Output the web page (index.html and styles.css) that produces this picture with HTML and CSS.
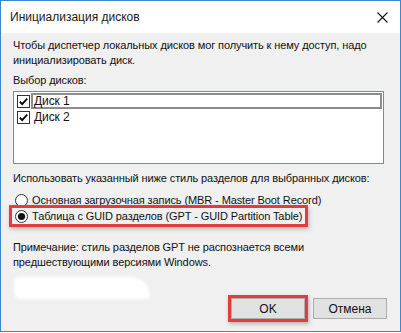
FILE: index.html
```html
<!DOCTYPE html>
<html>
<head>
  <meta charset="utf-8">
  <title>Инициализация дисков</title>
  <link rel="stylesheet" href="styles.css">
</head>
<body>
  <div class="window">
    <div class="titlebar">
      <span class="title-text">Инициализация дисков</span>
      <svg class="close-icon" width="11" height="11" viewBox="0 0 11 11">
        <path d="M0.5 0.5 L10.5 10.5 M10.5 0.5 L0.5 10.5" stroke="#111" stroke-width="1.1" fill="none"/>
      </svg>
    </div>
    <div class="content">
      <p class="intro">Чтобы диспетчер локальных дисков мог получить к нему доступ, надо<br>инициализировать диск.</p>
      <div class="label">Выбор дисков:</div>
      <div class="listbox">
        <div class="list-row selected">
          <svg class="check" width="13" height="13" viewBox="0 0 13 13">
            <rect x="0.5" y="0.5" width="12" height="12" fill="#fff" stroke="#333"/>
            <path d="M2.8 6.6 L5.2 9.2 L10.2 3.6" stroke="#000" stroke-width="1.8" fill="none"/>
          </svg>
          <span class="row-text">Диск 1</span>
        </div>
        <div class="list-row">
          <svg class="check" width="13" height="13" viewBox="0 0 13 13">
            <rect x="0.5" y="0.5" width="12" height="12" fill="#fff" stroke="#333"/>
            <path d="M2.8 6.6 L5.2 9.2 L10.2 3.6" stroke="#000" stroke-width="1.8" fill="none"/>
          </svg>
          <span class="row-text">Диск 2</span>
        </div>
      </div>
      <div class="label style-label">Использовать указанный ниже стиль разделов для выбранных дисков:</div>
      <div class="radio-group">
        <div class="radio-row">
          <svg class="radio" width="13" height="13" viewBox="0 0 13 13">
            <circle cx="6.5" cy="6.5" r="6" fill="#fff" stroke="#333"/>
          </svg>
          <span>Основная загрузочная запись (MBR - Master Boot Record)</span>
        </div>
        <div class="radio-row highlight">
          <svg class="radio" width="13" height="13" viewBox="0 0 13 13">
            <circle cx="6.5" cy="6.5" r="6" fill="#fff" stroke="#333"/>
            <circle cx="6.5" cy="6.5" r="3.6" fill="#111"/>
          </svg>
          <span>Таблица с GUID разделов (GPT - GUID Partition Table)</span>
        </div>
      </div>
      <p class="note">Примечание: стиль разделов GPT не распознается всеми<br>предшествующими версиями Windows.</p>
    </div>
    <div class="footer">
      <div class="smudge"></div>
      <div class="buttons">
        <button class="btn btn-ok">OK</button>
        <button class="btn">Отмена</button>
      </div>
    </div>
  </div>
</body>
</html>
```

FILE: styles.css
```css
html, body {
  margin: 0;
  padding: 0;
  width: 401px;
  height: 333px;
  overflow: hidden;
  background: #fff;
}

body {
  font-family: "Liberation Sans", Arial, sans-serif;
  font-size: 11px;
  letter-spacing: -0.1px;
  color: #111;
}

.window {
  box-sizing: border-box;
  width: 401px;
  height: 332px;
  border: 1px solid #3a87d3;
  background: #f0f0f0;
  display: flex;
  flex-direction: column;
}

.titlebar {
  flex: none;
  height: 32px;
  background: #fff;
  display: flex;
  align-items: center;
  justify-content: space-between;
  padding: 0 12px 0 9px;
}

.title-text {
  font-size: 12px;
  letter-spacing: 0;
  color: #1a1a1a;
}

.content {
  padding: 5px 16px 0 12px;
  line-height: 15px;
}

.intro {
  margin: 0;
  white-space: nowrap;
}

.label {
  margin-top: 5px;
}

.listbox {
  margin-top: 3px;
  height: 73px;
  box-sizing: border-box;
  border: 1px solid #828790;
  background: #fff;
  padding: 1px 1px 0 3px;
}

.list-row {
  height: 16px;
  display: flex;
  align-items: center;
}

.check {
  flex: none;
  margin-right: 1px;
}

.row-text {
  flex: 1;
  height: 14px;
  line-height: 14px;
  padding-left: 2px;
  border: 1px solid transparent;
  font-size: 12px;
}

.selected .row-text {
  border: 2px solid #8d8d8d;
  height: 12px;
  line-height: 12px;
  padding-left: 1px;
}

.style-label {
  margin-top: 7px;
  white-space: nowrap;
}

.radio-group {
  margin-top: 6px;
  display: flex;
  flex-direction: column;
  align-items: flex-start;
}

.radio-row {
  height: 16px;
  display: flex;
  align-items: center;
  gap: 4px;
  padding: 0 3px 0 3px;
  margin-left: -1px;
  white-space: nowrap;
}

.highlight {
  box-shadow: 0 0 0 3px #e23b40, 1px 2px 4px 3px rgba(0, 0, 0, 0.25);
}

.note {
  margin: 16px 0 0 0;
  white-space: nowrap;
}

.footer {
  margin-top: auto;
  display: flex;
  justify-content: space-between;
  align-items: flex-end;
  padding: 0 13px 12px 13px;
}

.smudge {
  width: 136px;
  height: 22px;
  margin-bottom: 20px;
  background: #fff;
  border-radius: 8px 40px 6px 14px;
  filter: blur(1.5px);
}

.buttons {
  display: flex;
  gap: 8px;
}

.btn {
  width: 74px;
  height: 21px;
  border: 1px solid #adadad;
  background: #e1e1e1;
  font-family: "Liberation Sans", Arial, sans-serif;
  font-size: 12px;
  color: #111;
  padding: 0;
}

.btn-ok {
  box-shadow: 0 0 0 3px #e23b40, 1px 2px 4px 3px rgba(0, 0, 0, 0.25);
}
```
